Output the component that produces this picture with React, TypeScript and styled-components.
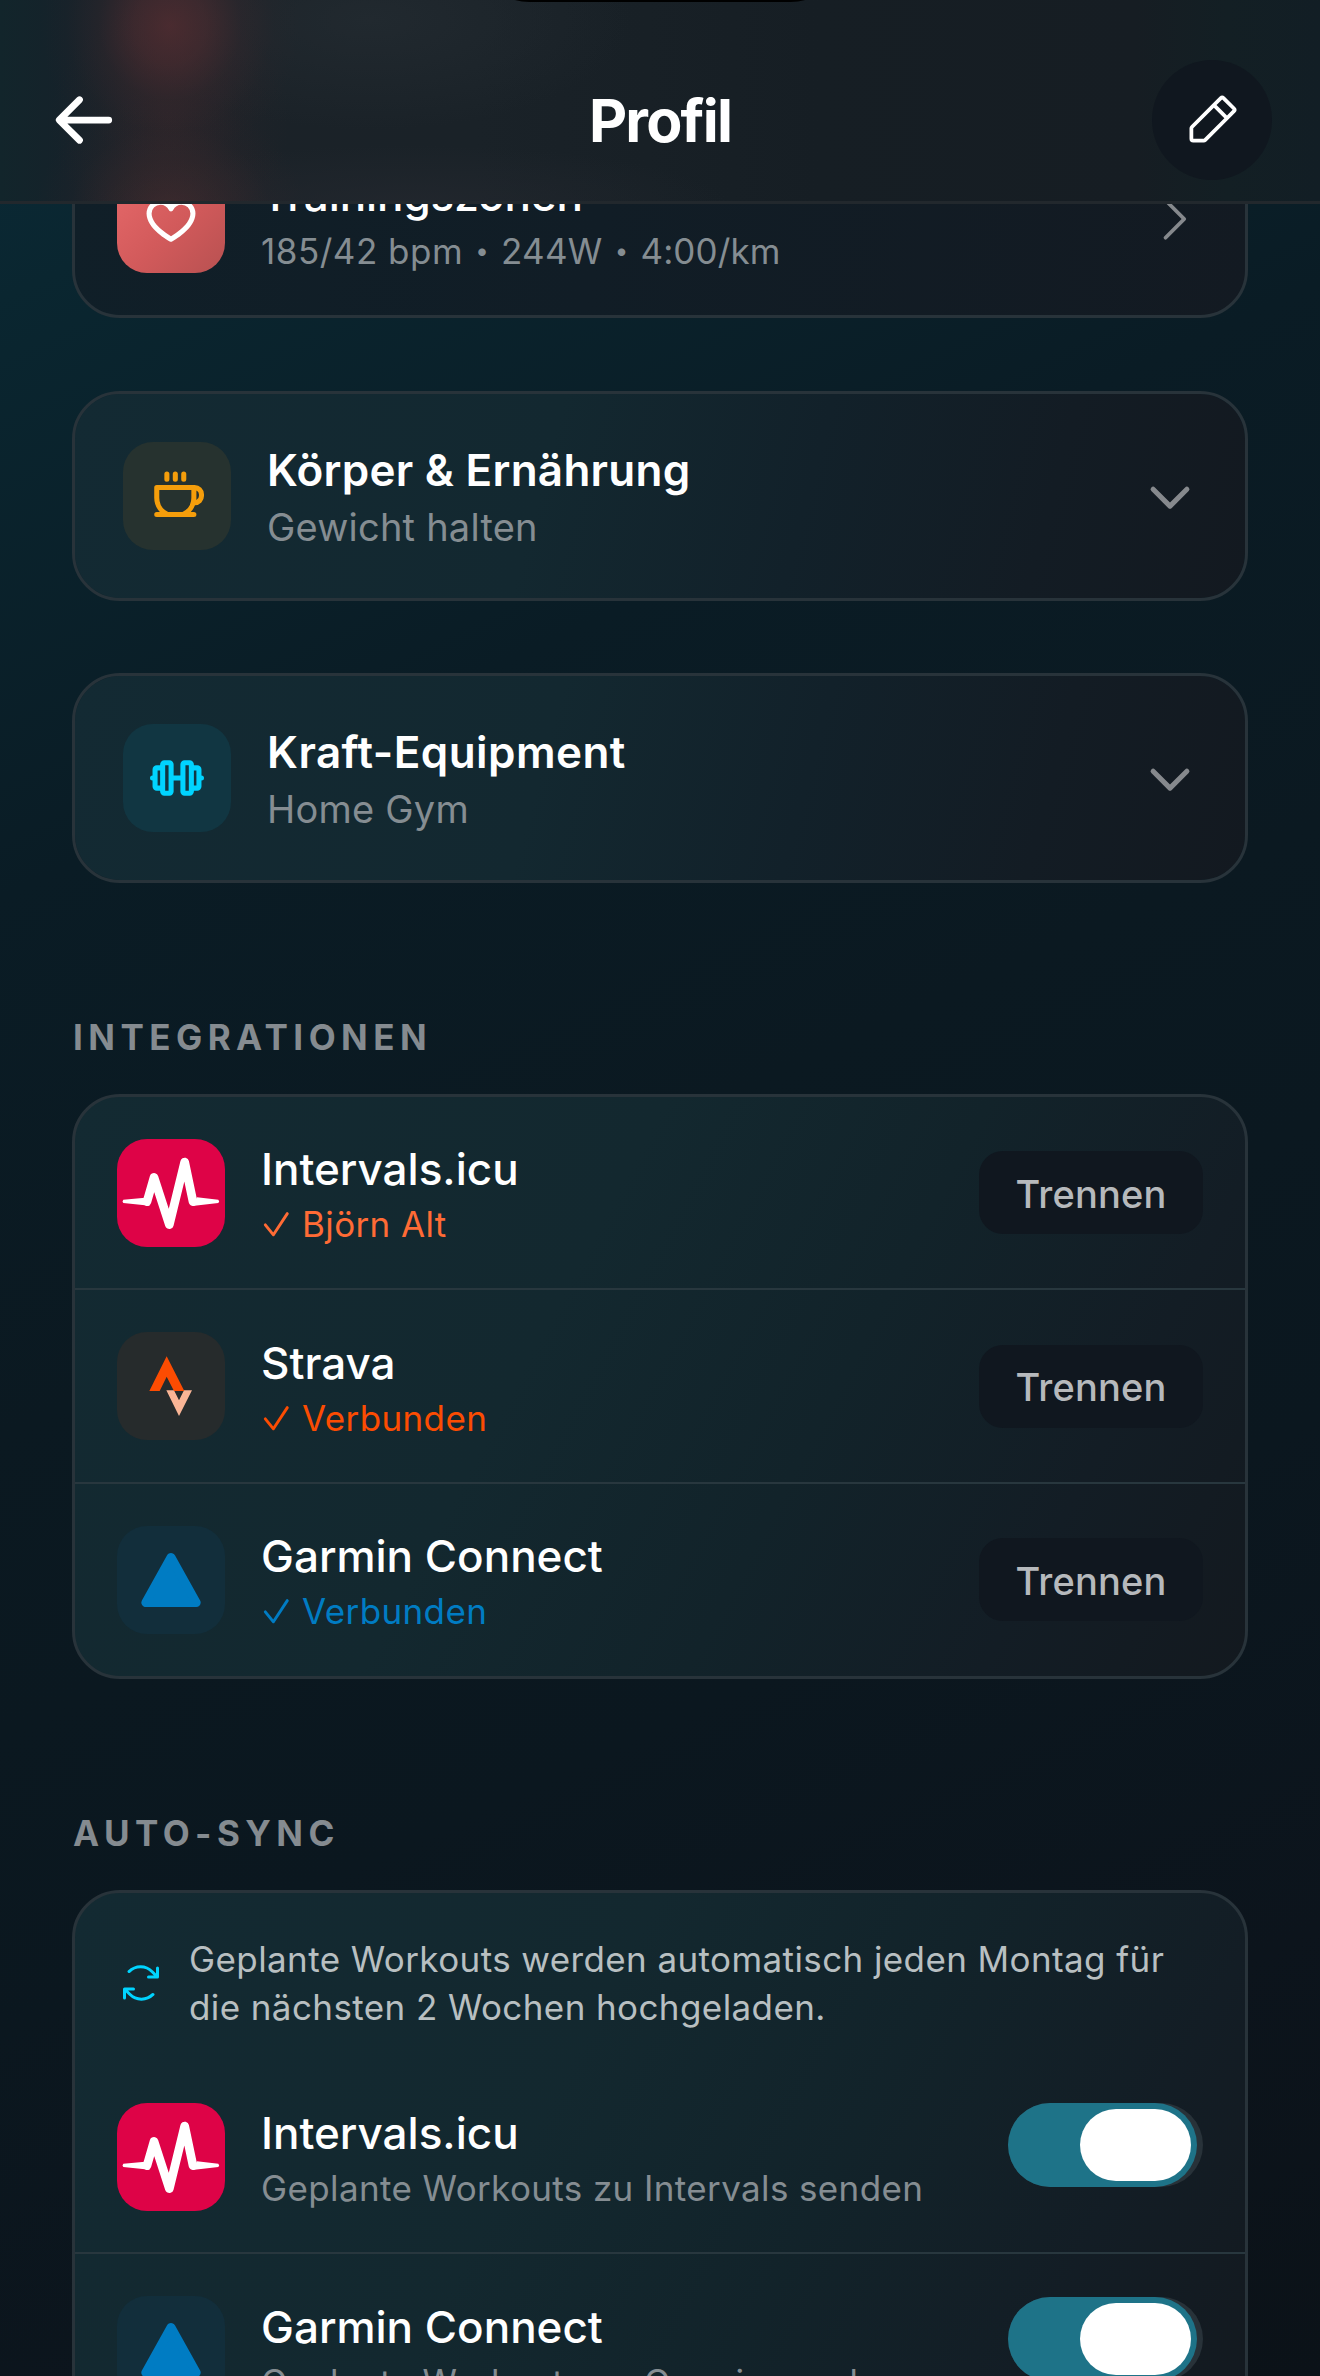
import React from 'react';
import styled, { createGlobalStyle } from 'styled-components';
import {
  PiArrowLeftBold,
  PiArrowsClockwise,
  PiBarbellBold,
  PiCaretDownBold,
  PiCaretRight,
  PiCoffeeBold,
  PiHeartBold,
  PiPencilSimple,
} from 'react-icons/pi';

const GlobalStyle = createGlobalStyle`
  *, *::before, *::after { box-sizing: border-box; }
  html, body { margin: 0; padding: 0; background: #0b151d; }
  body { overflow: hidden; }
  svg { display: block; }
`;

const Screen = styled.div`
  display: flex;
  flex-direction: column;
  width: 1320px;
  height: 2376px;
  overflow: hidden;
  background: linear-gradient(155deg, #0b2b38 0%, #0a2630 10%, #0a1c25 30%, #0b1921 48%, #0b171f 68%, #0c141c 85%, #0b1218 100%);
  color: #ffffff;
  font-family: Inter, 'Liberation Sans', sans-serif;
`;

const Header = styled.header`
  position: relative;
  z-index: 1;
  flex: none;
  display: grid;
  grid-template-columns: 1fr auto 1fr;
  align-items: center;
  height: 204px;
  padding: 39px 48px 0;
  border-bottom: 3px solid #22282d;
  background:
    radial-gradient(ellipse 130px 135px at 170px 26px, rgba(92, 46, 50, 0.7) 0%, rgba(86, 45, 49, 0.55) 28%, rgba(72, 42, 46, 0.26) 55%, rgba(60, 38, 42, 0.08) 80%, rgba(60, 38, 42, 0) 100%),
    radial-gradient(ellipse 135px 120px at 170px 216px, rgba(84, 46, 48, 0.55) 0%, rgba(72, 43, 45, 0.36) 40%, rgba(60, 38, 42, 0.1) 75%, rgba(50, 36, 40, 0) 100%),
    radial-gradient(ellipse 120px 120px at 170px 120px, rgba(60, 40, 44, 0.4) 0%, rgba(50, 38, 42, 0.15) 60%, rgba(50, 38, 42, 0) 100%),
    radial-gradient(ellipse 260px 110px at 370px 20px, rgba(36, 44, 50, 0.7) 0%, rgba(30, 36, 43, 0) 100%),
    radial-gradient(ellipse 320px 60px at 410px 205px, rgba(36, 40, 47, 0.7) 0%, rgba(30, 34, 41, 0) 100%),
    linear-gradient(90deg, #12252b 0%, #15222a 5%, #1b2228 12%, #1a2228 36%, #161e24 62%, #161d23 86%, #131f24 93%, #121e25 100%);
`;

const Notch = styled.div`
  position: absolute;
  top: -109px;
  left: 474px;
  width: 372px;
  height: 111px;
  border-radius: 56px;
  background: #000000;
`;

const BackButton = styled.button`
  justify-self: start;
  display: flex;
  padding: 0;
  border: 0;
  background: none;
  color: #ffffff;
`;

const PageTitle = styled.h1`
  margin: 0;
  padding-top: 2px;
  font-size: 59px;
  line-height: 72px;
  font-weight: 700;
  letter-spacing: -1.8px;
`;

const EditButton = styled.button`
  justify-self: end;
  display: flex;
  align-items: center;
  justify-content: center;
  width: 120px;
  height: 120px;
  padding: 0;
  border: 0;
  border-radius: 50%;
  background: #10171f;
  color: #ffffff;
`;

const Content = styled.main`
  display: flex;
  flex-direction: column;
  padding: 0 72px;
`;

const Card = styled.section`
  flex: none;
  border: 3px solid #28333a;
  border-radius: 48px;
  background: linear-gradient(105deg, #132a33 0%, #132830 40%, #12212a 62%, #131c24 82%, #131920 100%);
  background-clip: padding-box;
`;

const ZonesCard = styled(Card)`
  margin: -83.67px 0 0.67px;
  background: linear-gradient(100deg, #101f28 0%, #111d26 45%, #131a22 100%);
`;

const TallCard = styled(Card)`
  background: linear-gradient(118deg, #132a32 0%, #13282f 40%, #12232a 62%, #131d25 82%, #13191f 100%);
`;

const ExpandableCard = styled(Card)`
  display: flex;
  align-items: center;
  height: 210px;
  margin-top: 72px;
  padding: 0 48px;
`;

const Row = styled.div<{ $divided?: boolean }>`
  display: flex;
  align-items: center;
  height: ${(p) => (p.$divided ? '193.67px' : '191.67px')};
  padding: 0.33px 42px 0;
  border-bottom: ${(p) => (p.$divided ? '2px solid #28373e' : '0')};
`;

const IconTile = styled.div<{ $bg: string }>`
  flex: none;
  display: flex;
  align-items: center;
  justify-content: center;
  width: 108px;
  height: 108px;
  border-radius: 30px;
  background: ${(p) => p.$bg};
  overflow: hidden;
`;

const Labels = styled.div`
  flex: 1;
  display: flex;
  flex-direction: column;
  margin-left: 36px;
  padding-top: 5px;
  white-space: nowrap;
`;

const Title = styled.div<{ $ls?: number; $weight?: number }>`
  font-size: 44px;
  line-height: 54px;
  font-weight: ${(p) => p.$weight ?? 500};
  letter-spacing: ${(p) => p.$ls ?? 0}px;
`;

const Subtitle = styled.div<{ $color?: string }>`
  display: flex;
  align-items: center;
  font-size: 35px;
  line-height: 48px;
  margin-top: 4px;
  letter-spacing: 0.38px;
  color: ${(p) => p.$color ?? '#858d92'};
`;

const CardSubtitle = styled(Subtitle)`
  font-size: 38px;
  line-height: 52px;
  letter-spacing: 0.22px;
`;

const Metric = styled.span<{ $ls: number }>`
  letter-spacing: ${(p) => p.$ls}px;
`;

const Bullet = styled.span`
  width: 38px;
  padding-top: 1px;
  font-size: 24px;
  letter-spacing: 0;
  text-align: center;
`;

const Chevron = styled.span`
  display: flex;
  flex: none;
  color: #86898d;
`;

const CheckSlot = styled.svg`
  flex: none;
  width: 41px;
  height: 36px;
`;

const SectionLabel = styled.h2`
  margin: 133px 0 0 1px;
  height: 78px;
  font-size: 35px;
  line-height: 42px;
  font-weight: 700;
  letter-spacing: 5.45px;
  color: #858b90;
`;

const DisconnectButton = styled.button`
  flex: none;
  width: 224px;
  height: 83px;
  padding: 2px 0 0;
  border: 0;
  border-radius: 24px;
  background: #10171f;
  color: #b6b9bc;
  font: 500 38px/48px Inter, 'Liberation Sans', sans-serif;
  letter-spacing: 0.2px;
`;

const SyncInfo = styled.div`
  display: flex;
  align-items: center;
  padding: 42px 42px 30px;
  color: #00d4ff;
`;

const SyncText = styled.p`
  margin: 0 0 0 24px;
  font-size: 35px;
  line-height: 48px;
  letter-spacing: 0.4px;
  white-space: nowrap;
  color: #b8bfc1;
`;

const SyncLine = styled.span`
  display: block;
`;

const SwitchTrack = styled.span`
  align-self: flex-start;
  flex: none;
  width: 195px;
  height: 84px;
  margin-top: 42px;
  border-radius: 42px;
  background: #283239;
`;

const SwitchFill = styled.span`
  display: flex;
  justify-content: flex-end;
  width: 189px;
  height: 84px;
  padding: 6px;
  border-radius: 42px;
  background: #1e7388;
`;

const SwitchKnob = styled.span`
  width: 111px;
  height: 72px;
  border-radius: 36px;
  background: #ffffff;
`;

const Check = () => (
  <CheckSlot viewBox="0 0 41 36">
    <path d="M4.3 18.8 L12.4 28.8 L26.3 7.6" fill="none" stroke="currentColor" strokeWidth="2.9" strokeLinecap="round" strokeLinejoin="round" />
  </CheckSlot>
);

const IntervalsLogo = () => (
  <svg width="108" height="108" viewBox="22 27 324 324" fill="#ffffff">
    <polyline points="112,215 133,142 179,284 225,96 250,215" fill="none" stroke="#ffffff" strokeWidth="26" strokeLinecap="round" strokeLinejoin="round" />
    <path d="M41 209 L106 203 L120 227 L41 219 Q36 214 41 209 Z" />
    <path d="M326 209 L262 202 L248 228 L326 219 Q331 214 326 209 Z" />
  </svg>
);

const StravaLogo = () => (
  <svg width="108" height="108" viewBox="22 609 324 324">
    <polygon points="170,784 193,784 208,814 223,784 247,784 208,861" fill="#f9b596" />
    <polygon points="171,682 224,786 193,786 171,743 150,786 119,786" fill="#fc4c02" />
  </svg>
);

const GarminLogo = () => (
  <svg width="108" height="108" viewBox="0 0 108 108">
    <path d="M54 31.5 L28.8 76.6 L79.2 76.6 Z" fill="#007cc3" stroke="#007cc3" strokeWidth="9" strokeLinejoin="round" />
  </svg>
);

const Toggle = () => (
  <SwitchTrack>
    <SwitchFill>
      <SwitchKnob />
    </SwitchFill>
  </SwitchTrack>
);

type Service = {
  name: string;
  tile: string;
  logo: React.ReactNode;
  status: string;
  color: string;
};

const services: Service[] = [
  { name: 'Intervals.icu', tile: '#de0347', logo: <IntervalsLogo />, status: 'Björn Alt', color: '#ff6b35' },
  { name: 'Strava', tile: '#262b2c', logo: <StravaLogo />, status: 'Verbunden', color: '#fc4c02' },
  { name: 'Garmin Connect', tile: '#122e3b', logo: <GarminLogo />, status: 'Verbunden', color: '#007cc3' },
];

export default function App() {
  return (
    <>
      <GlobalStyle />
      <Screen>
        <Header>
          <Notch />
          <BackButton aria-label="Zurück">
            <PiArrowLeftBold size={72} />
          </BackButton>
          <PageTitle>Profil</PageTitle>
          <EditButton aria-label="Bearbeiten">
            <PiPencilSimple size={60} />
          </EditButton>
        </Header>
        <Content>
          <ZonesCard>
            <Row>
              <IconTile $bg="linear-gradient(135deg, #e86a6b 0%, #d25a5b 55%, #b85151 100%)">
                <PiHeartBold size={54} />
              </IconTile>
              <Labels>
                <Title $ls={-0.1}>Trainingszonen</Title>
                <Subtitle>
                  <Metric $ls={0.5}>185/42 bpm</Metric>
                  <Bullet>•</Bullet>
                  <Metric $ls={0.2}>244W</Metric>
                  <Bullet>•</Bullet>
                  <Metric $ls={0.1}>4:00/km</Metric>
                </Subtitle>
              </Labels>
              <Chevron>
                <PiCaretRight size={60} />
              </Chevron>
            </Row>
          </ZonesCard>

          <ExpandableCard>
            <IconTile $bg="#26322f">
              <PiCoffeeBold size={54} color="#f59e0b" />
            </IconTile>
            <Labels>
              <Title $ls={0.27} $weight={600}>Körper &amp; Ernährung</Title>
              <CardSubtitle>Gewicht halten</CardSubtitle>
            </Labels>
            <Chevron>
              <PiCaretDownBold size={54} />
            </Chevron>
          </ExpandableCard>

          <ExpandableCard>
            <IconTile $bg="#113642">
              <PiBarbellBold size={54} color="#00d4ff" />
            </IconTile>
            <Labels>
              <Title $ls={0.45} $weight={600}>Kraft-Equipment</Title>
              <CardSubtitle>Home Gym</CardSubtitle>
            </Labels>
            <Chevron>
              <PiCaretDownBold size={54} />
            </Chevron>
          </ExpandableCard>

          <SectionLabel>INTEGRATIONEN</SectionLabel>
          <TallCard>
            {services.map((s, i) => (
              <Row key={s.name} $divided={i < services.length - 1}>
                <IconTile $bg={s.tile}>{s.logo}</IconTile>
                <Labels>
                  <Title>{s.name}</Title>
                  <Subtitle $color={s.color}>
                    <Check />
                    {s.status}
                  </Subtitle>
                </Labels>
                <DisconnectButton>Trennen</DisconnectButton>
              </Row>
            ))}
          </TallCard>

          <SectionLabel>AUTO-SYNC</SectionLabel>
          <TallCard>
            <SyncInfo>
              <PiArrowsClockwise size={48} />
              <SyncText>
                <SyncLine>Geplante Workouts werden automatisch jeden Montag für</SyncLine>
                <SyncLine>die nächsten 2 Wochen hochgeladen.</SyncLine>
              </SyncText>
            </SyncInfo>
            <Row $divided>
              <IconTile $bg="#de0347">
                <IntervalsLogo />
              </IconTile>
              <Labels>
                <Title>Intervals.icu</Title>
                <Subtitle>Geplante Workouts zu Intervals senden</Subtitle>
              </Labels>
              <Toggle />
            </Row>
            <Row>
              <IconTile $bg="#122e3b">
                <GarminLogo />
              </IconTile>
              <Labels>
                <Title>Garmin Connect</Title>
                <Subtitle>Geplante Workouts zu Garmin senden</Subtitle>
              </Labels>
              <Toggle />
            </Row>
          </TallCard>
        </Content>
      </Screen>
    </>
  );
}
